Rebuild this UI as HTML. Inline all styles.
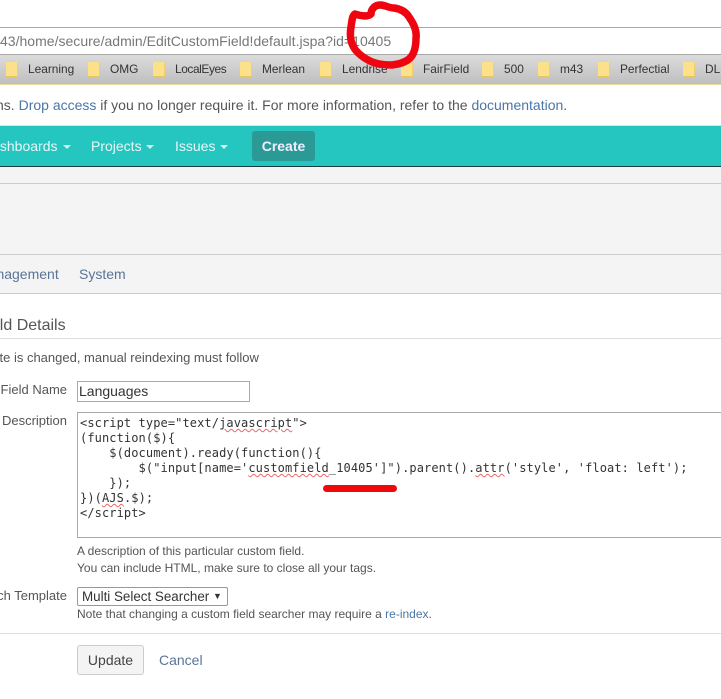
<!DOCTYPE html>
<html><head><meta charset="utf-8"><style>
html,body{margin:0;padding:0;background:#fff}
#p{position:relative;width:721px;height:699px;overflow:hidden;background:#fff;font-family:"Liberation Sans",sans-serif;font-size:14px;color:#333}
.a{position:absolute;white-space:nowrap;line-height:16px}
.r{position:absolute;left:0;width:721px}
a,.l{color:#4a76a8}
.bm{position:absolute;top:62px;width:11px;height:14px;background:#fce08a;border-right:1px solid #f2cf6a;border-bottom:1px solid #e8c45a;border-radius:1px}
.bt{position:absolute;top:61px;font-size:11.9px;line-height:16px;color:#333;white-space:nowrap}
.nav{position:absolute;top:137px;color:#e6f7f6;font-size:14px;line-height:18px;white-space:nowrap}
.car{position:absolute;top:145px;width:0;height:0;border:4px solid transparent;border-top-color:#d5f1ef;border-bottom:0}
.lab{position:absolute;white-space:nowrap;line-height:16px;font-size:13px;color:#555;text-align:right;right:654px}
.code{position:absolute;left:80px;top:416px;font-family:"DejaVu Sans Mono",monospace;font-size:12px;letter-spacing:.095px;line-height:15px;color:#333;white-space:pre}
.sq{text-decoration:underline wavy #e66;text-decoration-thickness:1px;text-underline-offset:1px}
.h{font-size:12px;color:#555}
</style></head><body><div id="p">
<div class="r" style="top:27px;height:1px;background:#aaa"></div>
<div class="a" style="left:0;top:33px;font-size:14px;letter-spacing:.015px;line-height:17px;color:#777">43/home/secure/admin/EditCustomField!default.jspa?id=10405</div>
<div class="r" style="top:54px;height:31px;background:linear-gradient(#dcdcdc,#bfbfbf);border-top:1px solid #a8a8a8;box-sizing:border-box;border-bottom:1px solid #e8dc9a"></div>
<div class="bm" style="left:6px"></div><div class="bt" style="left:28px">Learning</div>
<div class="bm" style="left:88px"></div><div class="bt" style="left:110px">OMG</div>
<div class="bm" style="left:153px"></div><div class="bt" style="left:175px;letter-spacing:-.4px">LocalEyes</div>
<div class="bm" style="left:240px"></div><div class="bt" style="left:262px">Merlean</div>
<div class="bm" style="left:320px"></div><div class="bt" style="left:342px">Lendrise</div>
<div class="bm" style="left:401px"></div><div class="bt" style="left:423px">FairField</div>
<div class="bm" style="left:482px"></div><div class="bt" style="left:504px">500</div>
<div class="bm" style="left:538px"></div><div class="bt" style="left:560px">m43</div>
<div class="bm" style="left:598px"></div><div class="bt" style="left:620px">Perfectial</div>
<div class="bm" style="left:683px"></div><div class="bt" style="left:705px">DL</div>
<div class="a" style="left:-4px;top:97px;font-size:14px;color:#555">ns. <span class="l">Drop access</span> if you no longer require it. For more information, refer to the <span class="l">documentation</span>.</div>
<div class="r" style="top:125px;height:42px;background:#26c6c0;border-top:1px solid #efe3a0;border-bottom:1px solid #1d3a3c;box-sizing:border-box"></div>
<div class="nav" style="left:-18px">Dashboards</div><div class="car" style="left:63px"></div>
<div class="nav" style="left:91px">Projects</div><div class="car" style="left:146px"></div>
<div class="nav" style="left:175px">Issues</div><div class="car" style="left:220px"></div>
<div class="a" style="left:252px;top:131px;width:63px;height:30px;background:#2b9a96;border-radius:3px;color:#eef;font-weight:bold;font-size:14px;line-height:30px;text-align:center">Create</div>
<div class="r" style="top:167px;height:127px;background:#f4f4f4"></div>
<div class="r" style="top:183px;height:1px;background:#ccc"></div>
<div class="r" style="top:254px;height:1px;background:#ccc"></div>
<div class="r" style="top:293px;height:1px;background:#ccc"></div>
<div class="a" style="left:-23px;top:266px;font-size:14px;color:#5a7499">Management</div>
<div class="a" style="left:79px;top:266px;font-size:14px;color:#5a7499">System</div>
<div class="a" style="left:-82px;top:316px;font-size:16px;line-height:20px;color:#555">Custom Field Details</div>
<div class="r" style="top:338px;height:1px;background:#ddd"></div>
<div class="a" style="left:-192px;top:350px;font-size:13px;color:#555">When this value is updated, a state is changed, manual reindexing must follow</div>
<div class="lab" style="top:382px">Field Name</div>
<div class="a" style="left:77px;top:381px;width:173px;height:21px;box-sizing:border-box;border:1px solid #aaa;font-size:14px;line-height:19px;padding-left:1px;color:#333">Languages</div>
<div class="lab" style="top:413px">Description</div>
<div class="a" style="left:77px;top:412px;width:660px;height:126px;box-sizing:border-box;border:1px solid #aaa"></div>
<div class="code">&lt;script type="text/<span class="sq">javascript</span>"&gt;
(function($){
    $(document).ready(function(){
        $("input[name='<span class="sq">customfield</span>_10405']").parent().<span class="sq">attr</span>('style', 'float: left');
    });
})(<span class="sq">AJS</span>.$);
&lt;/script&gt;</div>
<div class="a" style="left:323px;top:485px;width:74px;height:7px;border-radius:4px;background:#ee0a0a"></div>
<div class="a h" style="left:77px;top:543px">A description of this particular custom field.</div>
<div class="a h" style="left:77px;top:560px">You can include HTML, make sure to close all your tags.</div>
<div class="lab" style="top:588px">Search Template</div>
<div class="a" style="left:77px;top:587px;width:151px;height:19px;box-sizing:border-box;border:1px solid #999;border-radius:2px;font-size:13.4px;line-height:17px;padding-left:4px;color:#333">Multi Select Searcher<span style="position:absolute;left:135px;top:0;font-size:9px">▼</span></div>
<div class="a h" style="left:77px;top:606px">Note that changing a custom field searcher may require a <span class="l">re-index</span>.</div>
<div class="r" style="top:633px;height:1px;background:#ddd"></div>
<div class="a" style="left:77px;top:645px;width:67px;height:30px;box-sizing:border-box;border:1px solid #ccc;border-radius:3px;background:#f4f4f4;font-size:14px;line-height:28px;text-align:center;color:#444">Update</div>
<div class="a" style="left:159px;top:652px;font-size:14px;color:#5a7499">Cancel</div>
<svg class="a" style="left:0;top:0" width="721" height="699"><path d="M355,14C361,16 368,17 371,14C371,9 375,5 380,5C385,5 389,8 394,8C401,9 406,12 409,17C414,24 417,31 416,38C416,45 415,52 411,57C407,62 400,64 392,65C384,65 376,64 370,61C362,57 356,52 353,46C350,40 350,33 351,27C352,21 352,16 355,14Z" fill="none" stroke="#ee0510" stroke-width="7.5" stroke-linejoin="round"/></svg>
</div></body></html>
